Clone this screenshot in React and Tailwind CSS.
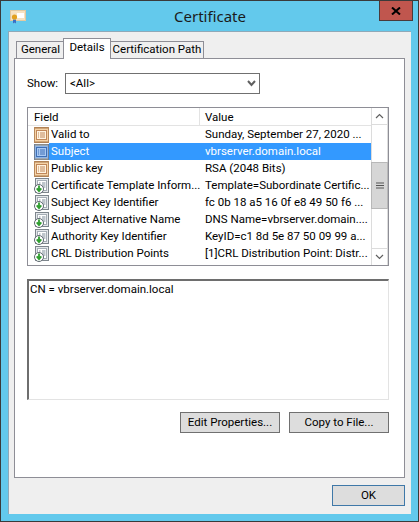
import React from 'react';

const rows = [
  { field: 'Valid to', value: 'Sunday, September 27, 2020 ...', icon: 'prop' },
  { field: 'Subject', value: 'vbrserver.domain.local', icon: 'prop', selected: true },
  { field: 'Public key', value: 'RSA (2048 Bits)', icon: 'prop' },
  { field: 'Certificate Template Inform...', value: 'Template=Subordinate Certific...', icon: 'ext' },
  { field: 'Subject Key Identifier', value: 'fc 0b 18 a5 16 0f e8 49 50 f6 ...', icon: 'ext' },
  { field: 'Subject Alternative Name', value: 'DNS Name=vbrserver.domain....', icon: 'ext' },
  { field: 'Authority Key Identifier', value: 'KeyID=c1 8d 5e 87 50 09 99 a...', icon: 'ext' },
  { field: 'CRL Distribution Points', value: '[1]CRL Distribution Point: Distr...', icon: 'ext' },
];

function PropIcon({ selected }) {
  const edge = selected ? '#6f7f96' : '#b98a5c';
  const fill = selected ? '#8fb6e8' : '#f6d3a6';
  const inner = selected ? '#a9c9f2' : '#fff3e0';
  const line = selected ? '#3f6fb5' : '#c0875a';
  return (
    <svg width="15" height="16" viewBox="0 0 15 16" className="shrink-0">
      <rect x="0.5" y="0.5" width="14" height="15" fill={fill} stroke={edge} />
      <path d="M1 1h13M1 15h13" stroke={selected ? '#a89a80' : '#a87a4e'} strokeWidth="1" />
      <rect x="2.5" y="3.5" width="10" height="9" fill={inner} stroke={line} />
      <path d="M6 6h5M6 8h5M6 10h5M4 6h1M4 8h1M4 10h1" stroke={line} strokeWidth="1" />
    </svg>
  );
}

function ExtIcon() {
  return (
    <svg width="15" height="16" viewBox="0 0 15 16" className="shrink-0">
      <rect x="1.5" y="0.5" width="13" height="14" fill="#e4e7ea" stroke="#7d858c" />
      <rect x="3.5" y="2.500" width="9" height="10" fill="#ffffff" stroke="#a6aeb6" />
      <path d="M8 5h3.500M8 7h3.500M8 9h3.500M5 5h1.500" stroke="#7f8c99" strokeWidth="1" />
      <circle cx="5" cy="11" r="4.5" fill="#ffffff" stroke="#5d666e" />
      <path d="M5 7.500v5M2.700 10.300L5 13l2.300-2.700" fill="none" stroke="#2f9e2f" strokeWidth="1.8" />
    </svg>
  );
}

function CertLogo() {
  return (
    <svg width="16" height="14" viewBox="0 0 16 14">
      <rect x="0.5" y="0.5" width="15" height="10" fill="#f6e2c2" stroke="#e3c9a0" />
      <rect x="7" y="3" width="7" height="5" fill="#ffffff" />
      <path d="M3 9.500v4l1.500-1 1.500 1v-4" fill="#3b6fc4" />
      <circle cx="4.5" cy="7" r="2.600" fill="#e3a11f" />
    </svg>
  );
}

function WinButton({ children, className }) {
  return (
    <button className={`h-[21px] bg-[#dddddd] border border-[#707070] text-[11.5px] text-black flex items-center justify-center ${className}`}>
      {children}
    </button>
  );
}

export default function App() {
  return (
    <div className="w-[419px] h-[522px] bg-[#63c9ec] border border-[#3a3a3a] flex flex-col font-['Roboto','Open_Sans',sans-serif] text-[11.5px] text-black overflow-hidden">
      {/* Title bar */}
      <div className="h-[30px] shrink-0 flex items-start">
        <div className="w-[30px] pl-[9px] pt-[9px]">
          <CertLogo />
        </div>
        <div className="flex-1 text-center font-['Noto_Sans',sans-serif] text-[15px] leading-[20px] pt-[5px] pl-[10px] text-[#1b1b1b]">Certificate</div>
        <div className="w-[34px] h-[21px] mr-[5px] -mt-px bg-[#c0564e] border border-[#4a3a3a] flex items-center justify-center">
          <svg width="10" height="8" viewBox="0 0 10 8">
            <path d="M1 0.500l8 7M9 0.500l-8 7" stroke="#000" strokeWidth="2" />
          </svg>
        </div>
      </div>

      {/* Client area */}
      <div className="flex-1 ml-[7px] mr-[7px] mb-[7px] bg-[#efefef] border-t border-l border-[#8fa9b8] pl-[5px] flex flex-col">
        {/* Tabs */}
        <div className="flex items-end h-[27px] pl-[2px] shrink-0 relative z-10 -mb-px whitespace-nowrap">
          <div className="h-[18px] w-[48px] -mr-px bg-[#efefef] border border-[#8e8e96] flex items-center justify-center pl-[1px]">General</div>
          <div className="h-[21px] w-[48px] bg-white border border-b-0 border-[#8e8e96] flex items-center justify-center pb-[2px]">Details</div>
          <div className="h-[18px] w-[94px] -ml-px bg-[#efefef] border border-[#8e8e96] flex items-center justify-center">Certification Path</div>
        </div>

        {/* Tab panel */}
        <div className="w-[391px] h-[420px] bg-white border border-[#8e8e96] flex flex-col pl-[12px] pr-[15px]">
          <div className="flex items-center h-[21px] mt-[14px] shrink-0">
            <span className="w-[38px]">Show:</span>
            <div className="w-[195px] h-[21px] border border-[#707070] flex items-center justify-between pl-[4px] pr-[3px]">
              <span>&lt;All&gt;</span>
              <svg width="9" height="7" viewBox="0 0 9 7">
                <path d="M1 1l3.500 4L8 1" fill="none" stroke="#606060" strokeWidth="2" />
              </svg>
            </div>
          </div>

          {/* Field list */}
          <div className="mt-[13px] h-[159px] border border-[#8e8e96] flex shrink-0 overflow-hidden">
            <div className="flex-1 min-w-0 flex flex-col">
              <div className="flex h-[18px] border-b border-[#e3e3e3] shrink-0">
                <div className="w-[172px] shrink-0 pl-[6px] border-r border-[#e3e3e3] leading-[18px]">Field</div>
                <div className="flex-1 pl-[5px] leading-[18px]">Value</div>
              </div>
              {rows.map((row, i) => (
                <div key={i} className={`flex h-[17px] shrink-0 items-center ${row.selected ? 'text-white' : ''}`}>
                  <div className="w-[172px] shrink-0 flex items-center h-full pl-[6px]">
                    {row.icon === 'prop' ? <PropIcon selected={row.selected} /> : <ExtIcon />}
                    <span className={`flex-1 h-full leading-[17px] pl-[2px] whitespace-nowrap ${row.selected ? 'bg-[#3399ff]' : ''}`}>{row.field}</span>
                  </div>
                  <div className={`flex-1 h-full leading-[17px] pl-[5px] whitespace-nowrap ${row.selected ? 'bg-[#3399ff]' : ''}`}>{row.value}</div>
                </div>
              ))}
            </div>

            {/* Scrollbar */}
            <div className="w-[17px] shrink-0 flex flex-col border-l border-r border-[#dcdcdc] bg-white">
              <div className="h-[17px] border-b border-[#dcdcdc] flex items-center justify-center">
                <svg width="9" height="6" viewBox="0 0 9 6"><path d="M1 5l3.500-3.500L8 5" fill="none" stroke="#606060" strokeWidth="1.2" /></svg>
              </div>
              <div className="h-[37px]" />
              <div className="h-[47px] bg-[#d6d6d6] border border-[#b8b8b8] -mx-px flex items-center justify-center">
                <svg width="8" height="7" viewBox="0 0 8 7"><path d="M0 1h8M0 3.500h8M0 6h8" stroke="#555" strokeWidth="1" /></svg>
              </div>
              <div className="flex-1" />
              <div className="h-[17px] border-t border-[#dcdcdc] flex items-center justify-center">
                <svg width="9" height="6" viewBox="0 0 9 6"><path d="M1 1l3.500 3.500L8 1" fill="none" stroke="#606060" strokeWidth="1.2" /></svg>
              </div>
            </div>
          </div>

          {/* Value box */}
          <div className="mt-[13px] h-[121px] border-t-2 border-l-2 border-r border-b border-t-[#6e6e6e] border-l-[#6e6e6e] border-r-[#e3e3e3] border-b-[#e3e3e3] shrink-0 px-[1px] leading-[16px]">
            CN = vbrserver.domain.local
          </div>

          <div className="mt-[12px] flex justify-end gap-[9px] shrink-0">
            <WinButton className="w-[100px]">Edit Properties...</WinButton>
            <WinButton className="w-[100px]">Copy to File...</WinButton>
          </div>
        </div>

        {/* Footer */}
        <div className="flex justify-end mt-[7px] w-[391px]">
          <button className="w-[73px] h-[21px] bg-[#dddddd] border border-[#3f78a8] text-[11.5px]">OK</button>
        </div>
      </div>
    </div>
  );
}
